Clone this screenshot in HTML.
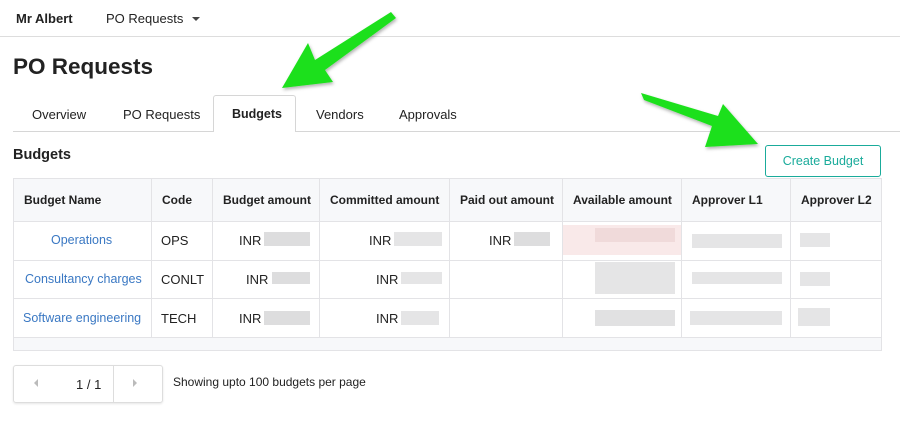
<!DOCTYPE html>
<html><head><style>
*{margin:0;padding:0;box-sizing:border-box}
body{width:900px;height:424px;background:#fff;font-family:"Liberation Sans",sans-serif;color:#222;position:relative;overflow:hidden;font-size:13px}
.a{position:absolute;white-space:nowrap}
.b{font-weight:bold}
.h{font-weight:bold;font-size:12px}
.lnk{color:#3a78c3}
.blur{position:absolute;background:#d4d4d6;opacity:.8}
.vl{position:absolute;top:178px;height:160px;width:1px;background:#e3e3e6}
.hl{position:absolute;left:13px;width:868px;height:1px;background:#e3e3e6}
</style></head><body>
<div class="a b" style="left:16px;top:11px;font-size:13px">Mr Albert</div>
<div class="a" style="left:106px;top:11px;font-size:13px">PO Requests</div>
<div class="a" style="left:192px;top:17px;width:0;height:0;border-left:4px solid transparent;border-right:4px solid transparent;border-top:4px solid #444"></div>
<div class="a" style="left:0;top:36px;width:900px;height:1px;background:#ddd"></div>
<div class="a b" style="left:13px;top:54px;font-size:22.5px;color:#222">PO Requests</div>
<div class="a" style="left:13px;top:131px;width:887px;height:1px;background:#d6d6d6"></div>
<div class="a" style="left:213px;top:95px;width:83px;height:37px;border:1px solid #d6d6d6;border-bottom:none;border-radius:3px 3px 0 0;background:#fff"></div>
<div class="a" style="left:32px;top:107px">Overview</div>
<div class="a" style="left:123px;top:107px">PO Requests</div>
<div class="a b" style="left:232px;top:107px;font-size:12.5px">Budgets</div>
<div class="a" style="left:316px;top:107px">Vendors</div>
<div class="a" style="left:399px;top:107px">Approvals</div>
<div class="a b" style="left:13px;top:147px;font-size:14.5px">Budgets</div>
<div class="a" style="left:765px;top:145px;width:116px;height:32px;border:1px solid #1aab9b;border-radius:3px;color:#1aab9b;text-align:center;line-height:30px;font-size:12.5px">Create Budget</div>
<!-- table -->
<div class="a" style="left:13px;top:178px;width:869px;height:173px;border:1px solid #e3e3e6;background:#fff"></div>
<div class="a" style="left:14px;top:179px;width:867px;height:42px;background:#f7f8fa"></div>
<div class="a" style="left:14px;top:337px;width:867px;height:13px;background:#f7f8fa"></div>
<div class="hl" style="top:221px"></div><div class="hl" style="top:260px"></div><div class="hl" style="top:298px"></div><div class="hl" style="top:337px"></div>
<div class="vl" style="left:151px"></div><div class="vl" style="left:212px"></div><div class="vl" style="left:319px"></div><div class="vl" style="left:449px"></div><div class="vl" style="left:562px"></div><div class="vl" style="left:681px"></div><div class="vl" style="left:790px"></div>
<div class="a h" style="left:24px;top:193px">Budget Name</div>
<div class="a h" style="left:162px;top:193px">Code</div>
<div class="a h" style="left:223px;top:193px">Budget amount</div>
<div class="a h" style="left:330px;top:193px">Committed amount</div>
<div class="a h" style="left:460px;top:193px">Paid out amount</div>
<div class="a h" style="left:573px;top:193px">Available amount</div>
<div class="a h" style="left:692px;top:193px">Approver L1</div>
<div class="a h" style="left:801px;top:193px">Approver L2</div>
<div class="a lnk" style="left:51px;top:233px;font-size:12.5px">Operations</div>
<div class="a lnk" style="left:25px;top:272px;font-size:12.5px">Consultancy charges</div>
<div class="a lnk" style="left:23px;top:311px;font-size:12.5px">Software engineering</div>
<div class="a" style="left:161px;top:233px">OPS</div>
<div class="a" style="left:161px;top:272px">CONLT</div>
<div class="a" style="left:161px;top:311px">TECH</div>
<div class="a" style="left:239px;top:233px">INR</div><div class="blur" style="left:264px;top:232px;width:46px;height:14px"></div>
<div class="a" style="left:246px;top:272px">INR</div><div class="blur" style="left:272px;top:272px;width:38px;height:12px"></div>
<div class="a" style="left:239px;top:311px">INR</div><div class="blur" style="left:264px;top:311px;width:46px;height:14px"></div>
<div class="a" style="left:369px;top:233px">INR</div><div class="blur" style="left:394px;top:232px;width:48px;height:14px;opacity:.6"></div>
<div class="a" style="left:376px;top:272px">INR</div><div class="blur" style="left:401px;top:272px;width:41px;height:12px;opacity:.6"></div>
<div class="a" style="left:376px;top:311px">INR</div><div class="blur" style="left:401px;top:311px;width:38px;height:14px;opacity:.6"></div>
<div class="a" style="left:489px;top:233px">INR</div><div class="blur" style="left:514px;top:232px;width:36px;height:14px"></div>
<div class="blur" style="left:563px;top:225px;width:118px;height:30px;background:#f8e4e4"></div>
<div class="blur" style="left:595px;top:228px;width:80px;height:14px;background:#eed6d6"></div>
<div class="blur" style="left:595px;top:262px;width:80px;height:32px;opacity:.6"></div>
<div class="blur" style="left:595px;top:310px;width:80px;height:16px;opacity:.7"></div>
<div class="blur" style="left:692px;top:234px;width:90px;height:14px;opacity:.6"></div>
<div class="blur" style="left:692px;top:272px;width:90px;height:12px;opacity:.6"></div>
<div class="blur" style="left:690px;top:311px;width:92px;height:14px;opacity:.6"></div>
<div class="blur" style="left:800px;top:233px;width:30px;height:14px;opacity:.6"></div>
<div class="blur" style="left:800px;top:272px;width:30px;height:14px;opacity:.6"></div>
<div class="blur" style="left:798px;top:308px;width:32px;height:18px;opacity:.6"></div>
<!-- pagination -->
<div class="a" style="left:13px;top:365px;width:150px;height:38px;border:1px solid #ddd;border-radius:3px;box-shadow:0 1px 2px rgba(0,0,0,.1)"></div>
<div class="a" style="left:113px;top:366px;width:1px;height:36px;background:#ddd"></div>
<div class="a" style="left:34px;top:379px;width:0;height:0;border-top:4px solid transparent;border-bottom:4px solid transparent;border-right:4px solid #bbb"></div>
<div class="a" style="left:133px;top:379px;width:0;height:0;border-top:4px solid transparent;border-bottom:4px solid transparent;border-left:4px solid #bbb"></div>
<div class="a" style="left:76px;top:377px">1 / 1</div>
<div class="a" style="left:173px;top:375px;font-size:12px">Showing upto 100 budgets per page</div>
<!-- arrows -->
<svg class="a" style="left:0;top:0" width="900" height="424">
<defs><filter id="s"><feDropShadow dx="1" dy="2" stdDeviation="1.5" flood-opacity=".3"/></filter></defs>
<polygon filter="url(#s)" fill="#1de01d" points="391,12 396,18 325,70 333,82 282,88 308,43 315,60"/>
<polygon filter="url(#s)" fill="#1de01d" points="641,93 644,100 712,126 705,147 758,144 723,104 718,116"/>
</svg>
</body></html>
